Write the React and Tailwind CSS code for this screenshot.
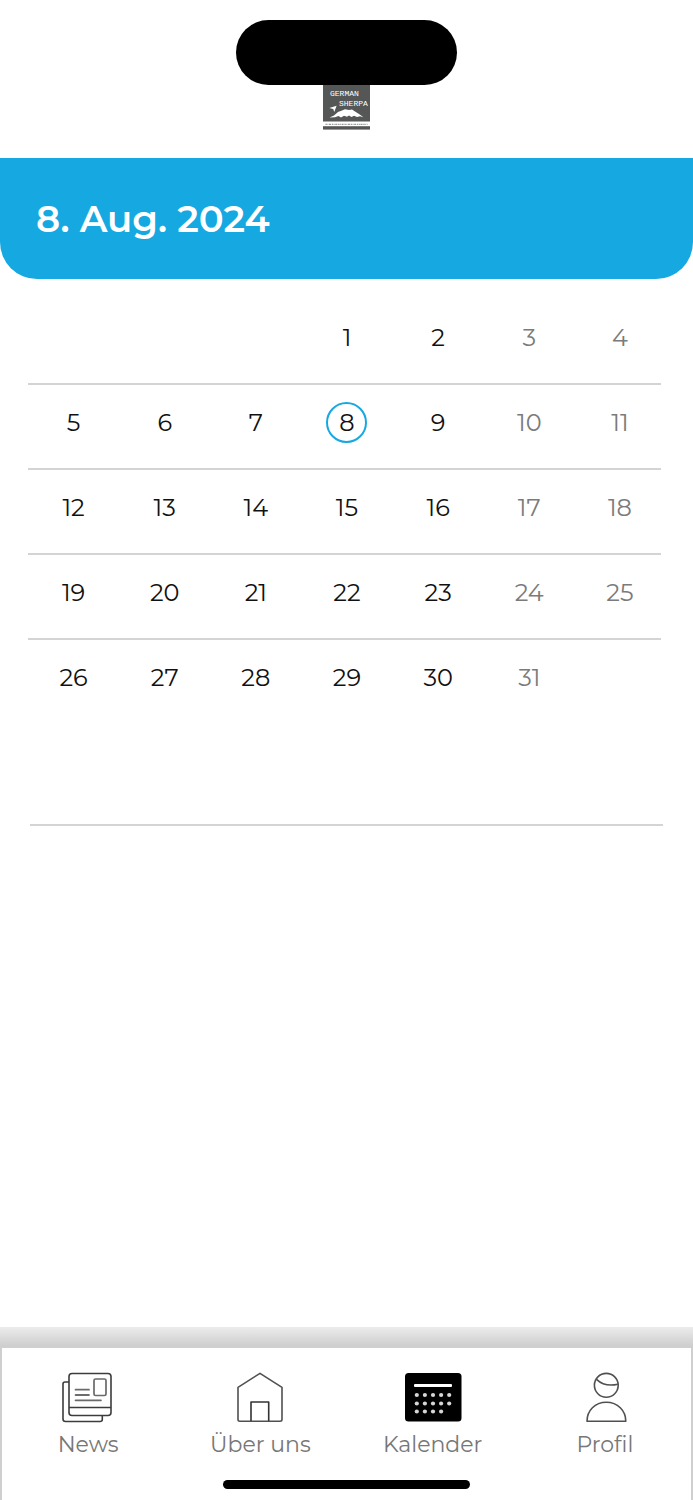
import React, { useState } from "react";

const WEEKS = [
  [null, null, null, 1, 2, 3, 4],
  [5, 6, 7, 8, 9, 10, 11],
  [12, 13, 14, 15, 16, 17, 18],
  [19, 20, 21, 22, 23, 24, 25],
  [26, 27, 28, 29, 30, 31, null],
];

function Logo() {
  return (
    <svg width="47" height="45" viewBox="0 0 47 45" role="img" aria-label="German Sherpa">
      <rect width="47" height="36.5" fill="#555757" />
      <g fill="#fff" fontSize="8" fontFamily="'Liberation Mono', monospace">
        <text x="7" y="11">GERMAN</text>
        <text x="16" y="21">SHERPA</text>
      </g>
      <path
        d="M6.5 32.5 L11 30.5 L15 27 L19 25.5 L22 24.3 L26 25 L29 24.6 L32 26.5 L36 29 L40.5 32.3 L37 31.3 L34 32 L31 30.8 L28.5 32 L26 30.6 L24 31.8 L21 30.8 L18 32.5 L15.5 31 L12 32.3 Z"
        fill="#fff"
      />
      <path d="M6.3 23 L13.6 20.8 L11.3 27 L10.2 24 Z" fill="#fff" />
      <path d="M2.5 39.3 H44.5" stroke="#999" strokeWidth="1.2" strokeDasharray="1.4 .6 .8 .7 2 .8" />
      <rect y="41.2" width="47" height="3.4" fill="#555757" />
    </svg>
  );
}

function NewsIcon() {
  return (
    <svg width="52" height="52" viewBox="1 0 52 52" fill="none" stroke="#3c3c3c" strokeWidth="1.6" aria-hidden="true">
      <path d="M8 10 H4 Q2 10 2 12 V47 Q2 49.5 4.5 49.5 H39 Q41.3 49.5 41.3 47.5 V43.5" />
      <rect x="8" y="1.5" width="42" height="42" rx="3" />
      <path d="M8 35.5 H50" />
      <g stroke="#6a6a6a" strokeWidth="1.7" strokeLinecap="round">
        <rect x="33" y="7" width="12" height="16.5" rx="1.5" />
        <path d="M14.5 17.7 H28 M14.5 28.3 H40" />
      </g>
      <path d="M14.5 23 H28" strokeLinecap="round" />
    </svg>
  );
}

function HomeIcon() {
  return (
    <svg width="52" height="52" viewBox="0 0 52 52" fill="none" stroke="#505050" strokeWidth="1.6" strokeLinejoin="round" aria-hidden="true">
      <path d="M26 1.3 L48 15.3 V47.5 Q48 49.2 46 49.2 H6 Q4 49.2 4 47.5 V15.3 Z" />
      <path d="M17 49 V30 H34.7 V49" stroke="#333" />
    </svg>
  );
}

const DOT_ROWS = [
  { y: 23, count: 5 },
  { y: 31.5, count: 5 },
  { y: 39.5, count: 4 },
];

function CalendarIcon() {
  return (
    <svg width="58" height="52" viewBox="0 0 58 52" aria-hidden="true">
      <rect x="1" y="1" width="56.5" height="48.5" rx="3.5" fill="#000" />
      <rect x="10" y="12" width="38" height="3" rx="1" fill="#fff" />
      {DOT_ROWS.map((row) =>
        Array.from({ length: row.count }, (_, i) => (
          <circle key={`${row.y}-${i}`} cx={12.8 + i * 8.1} cy={row.y} r="2.1" fill="#d6d6d6" />
        ))
      )}
    </svg>
  );
}

function ProfileIcon() {
  return (
    <svg width="52" height="52" viewBox="-1 0 52 52" fill="none" stroke="#505050" strokeWidth="1.6" strokeLinejoin="round" aria-hidden="true">
      <circle cx="26.3" cy="13.3" r="11.9" />
      <path d="M16.5 7.3 C22 12.5 30 14 37.8 12.2" />
      <path d="M7 49.3 C7 38.5 15 30.3 26.3 30.3 C37.6 30.3 45.8 38.5 45.8 49.3 Z" />
    </svg>
  );
}

const TABS = [
  { label: "News", Icon: NewsIcon },
  { label: "Über uns", Icon: HomeIcon },
  { label: "Kalender", Icon: CalendarIcon },
  { label: "Profil", Icon: ProfileIcon },
];

export default function App() {
  const [selected, setSelected] = useState(8);

  return (
    <div className="flex min-h-screen flex-col bg-white font-['Montserrat','Inter',sans-serif]">
      <header className="flex h-[158px] flex-col items-center pt-5">
        <div className="h-[65px] w-[221px] rounded-full bg-black" />
        <Logo />
      </header>

      <div className="flex h-[121px] items-center rounded-b-[37px] bg-[#16a8e1] px-9">
        <h1 className="text-[37px] font-semibold leading-none text-white">{`${selected}. Aug. 2024`}</h1>
      </div>

      <main className="flex-1 px-[30px] pt-[21px]">
        <div className="h-[526px] border-b-2 border-[#d4d4d4]">
          <table className="relative -left-0.5 w-full table-fixed border-separate border-spacing-0 text-[24px]">
            <tbody>
              {WEEKS.map((week, w) => (
                <tr key={w} className="group h-[85px]">
                  {week.map((day, d) => (
                    <td
                      key={d}
                      className="w-[14.4%] border-b-2 border-[#d4d4d4] p-0 pt-[17px] text-center align-top last:w-auto last:pl-1 group-last:border-b-0"
                    >
                      {day && (
                        <button
                          type="button"
                          onClick={() => setSelected(day)}
                          aria-pressed={day === selected}
                          className={`inline-flex size-[41px] items-center justify-center rounded-full border-2 leading-none ${
                            day === selected ? "border-[#16a8e1]" : "border-transparent"
                          } ${d > 4 ? "text-[#7b7b7b]" : "text-[#111111]"}`}
                        >
                          {day}
                        </button>
                      )}
                    </td>
                  ))}
                </tr>
              ))}
            </tbody>
          </table>
        </div>
      </main>

      <div className="h-[19px] bg-linear-to-b from-[#ececec] to-[#cecece]" />
      <nav className="flex h-[154px] flex-col items-center border-x-2 border-t-2 border-[#cfcfcf] pt-6">
        <div className="grid w-full grid-cols-4">
          {TABS.map(({ label, Icon }) => (
            <a
              key={label}
              href="#"
              aria-current={label === "Kalender" ? "page" : undefined}
              className="flex flex-col items-center gap-[7px] text-[22px] leading-7 text-[#777777]"
            >
              <Icon />
              {label}
            </a>
          ))}
        </div>
        <div className="mt-[21px] h-[9px] w-[247px] rounded-full bg-black" />
      </nav>
    </div>
  );
}
